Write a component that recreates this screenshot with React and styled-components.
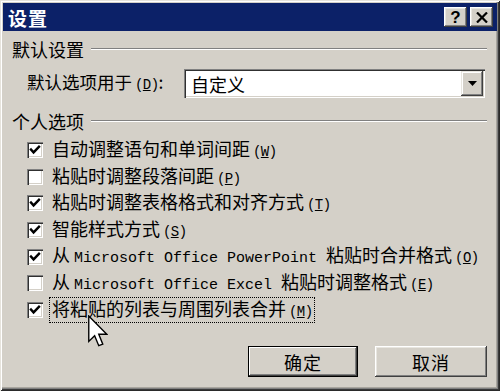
import React from "react";
import styled, { createGlobalStyle } from "styled-components";

const Global = createGlobalStyle`
  html, body { margin: 0; padding: 0; background: #d4d0c8; }
  body { font-family: "Noto Sans CJK SC", sans-serif; }
`;

const Frame = styled.div`
  position: relative;
  width: 500px;
  height: 391px;
  box-sizing: border-box;
  padding: 3px 3px 5px 3px;
  background: #d4d0c8;
  box-shadow: inset 1px 1px 0 #e6e3dc, inset -1px -1px 0 #2a2a2a,
    inset 2px 2px 0 #ffffff, inset -2px -2px 0 #3a3a3a,
    inset -3px -3px 0 #808080, inset -4px -4px 0 #a8a59e;
  display: flex;
  flex-direction: column;
  color: #000;
  font-family: "Noto Sans CJK SC", sans-serif;
  overflow: hidden;
`;

const TitleBar = styled.div`
  height: 28px;
  flex: none;
  background: #0c2168;
  display: flex;
  align-items: center;
  padding: 0 4px 0 5px;
`;

const Title = styled.div`
  flex: 1;
  color: #fff;
  font-weight: 700;
  font-size: 19px;
  letter-spacing: 1px;
  line-height: 1;
`;

const CapButton = styled.div`
  width: 23px;
  height: 20px;
  box-sizing: border-box;
  margin-left: ${(p) => p.$gap || 0}px;
  background: #d4d0c8;
  box-shadow: inset -1px -1px 0 #404040, inset 1px 1px 0 #ffffff,
    inset -2px -2px 0 #808080, inset 2px 2px 0 #e8e6e0;
  display: flex;
  align-items: center;
  justify-content: center;
  font-family: "Liberation Sans", sans-serif;
  font-weight: 700;
  font-size: 17px;
  line-height: 1;
  color: #000;
`;

const Body = styled.div`
  flex: 1;
  display: flex;
  flex-direction: column;
  padding: 0 10px 0 9px;
`;

const GroupHeader = styled.div`
  display: flex;
  align-items: center;
  height: 20px;
  margin-top: ${(p) => p.$top}px;
  font-size: 18px;
  line-height: 20px;
`;

const Rule = styled.div`
  flex: 1;
  margin-left: 7px;
  height: 0;
  border-top: 1px solid #808080;
  border-bottom: 1px solid #ffffff;
`;

const ComboRow = styled.div`
  display: flex;
  align-items: center;
  height: 29px;
  margin: 10px 2px 0 15px;
`;

const ComboLabel = styled.div`
  width: 157px;
  font-size: 17.5px;
  line-height: 20px;
  white-space: nowrap;
`;

const Combo = styled.div`
  flex: 1;
  height: 29px;
  box-sizing: border-box;
  padding: 2px;
  background: #fff;
  box-shadow: inset 1px 1px 0 #808080, inset 2px 2px 0 #303030,
    inset -1px -1px 0 #ffffff, inset -2px -2px 0 #d4d0c8;
  display: flex;
  align-items: center;
`;

const ComboValue = styled.div`
  flex: 1;
  padding-left: 5px;
  font-size: 18px;
  line-height: 20px;
`;

const DropButton = styled.div`
  width: 22px;
  height: 25px;
  box-sizing: border-box;
  background: #d4d0c8;
  box-shadow: inset -1px -1px 0 #404040, inset 1px 1px 0 #e8e6e0,
    inset -2px -2px 0 #808080, inset 2px 2px 0 #ffffff;
  display: flex;
  align-items: center;
  justify-content: center;
`;

const List = styled.div`
  display: flex;
  flex-direction: column;
  margin: 6px 0 0 15px;
`;

const Row = styled.div`
  height: 26.6px;
  display: flex;
  align-items: center;
`;

const Box = styled.div`
  width: 16px;
  height: 16px;
  flex: none;
  box-sizing: border-box;
  background: #fff;
  box-shadow: inset 1px 1px 0 #808080, inset 2px 2px 0 #303030,
    inset -1px -1px 0 #ffffff, inset -2px -2px 0 #d4d0c8;
  display: flex;
  align-items: center;
  justify-content: center;
`;

const Label = styled.div`
  margin-left: 6px;
  padding: 0 2px;
  border: 1px dotted ${(p) => (p.$focus ? "#000" : "transparent")};
  font-size: 18px;
  line-height: 20px;
  white-space: nowrap;
`;

const Mono = styled.span`
  font-family: "Liberation Mono", monospace;
  font-size: 15px;
`;

const Accel = styled.span`
  font-family: "Liberation Mono", monospace;
  font-size: 14px;
  letter-spacing: -0.6px;
  margin-left: 3px;
`;

const U = styled.span`
  text-decoration: underline;
`;

const ButtonRow = styled.div`
  display: flex;
  justify-content: flex-end;
  gap: 17px;
  margin-top: 23px;
`;

const PushButton = styled.div`
  width: ${(p) => p.$w}px;
  height: 31px;
  box-sizing: border-box;
  background: #d4d0c8;
  display: flex;
  align-items: center;
  justify-content: center;
  font-size: 18px;
  letter-spacing: 1px;
  box-shadow: ${(p) =>
    p.$default
      ? "inset 0 0 0 1px #000, inset -2px -2px 0 #404040, inset 2px 2px 0 #ffffff, inset -3px -3px 0 #808080"
      : "inset -1px -1px 0 #404040, inset 1px 1px 0 #ffffff, inset -2px -2px 0 #808080, inset 2px 2px 0 #e8e6e0"};
`;

const Cursor = styled.svg`
  position: absolute;
  left: 88px;
  top: 315px;
`;

const Check = () => (
  <svg width="12" height="12" viewBox="0 0 12 12">
    <path d="M2 5.5 L4.6 8.4 L10 2.8" fill="none" stroke="#000" strokeWidth="2.4" strokeLinecap="square" />
  </svg>
);

const items = [
  { checked: true, text: "自动调整语句和单词间距", key: "W" },
  { checked: false, text: "粘贴时调整段落间距", key: "P" },
  { checked: true, text: "粘贴时调整表格格式和对齐方式", key: "T" },
  { checked: true, text: "智能样式方式", key: "S" },
  { checked: true, pre: "从 ", mono: "Microsoft Office PowerPoint ", text: "粘贴时合并格式", key: "O" },
  { checked: false, pre: "从 ", mono: "Microsoft Office Excel ", text: "粘贴时调整格式", key: "E" },
  { checked: true, text: "将粘贴的列表与周围列表合并", key: "M", focus: true },
];

export default function App() {
  return (
    <>
      <Global />
      <Frame>
        <TitleBar>
          <Title>设置</Title>
          <CapButton>?</CapButton>
          <CapButton $gap={3}>
            <svg width="12" height="11" viewBox="0 0 12 11">
              <path d="M1 0.5 L11 10.5 M11 0.5 L1 10.5" stroke="#000" strokeWidth="2.2" />
            </svg>
          </CapButton>
        </TitleBar>
        <Body>
          <GroupHeader $top={8}>
            默认设置
            <Rule />
          </GroupHeader>
          <ComboRow>
            <ComboLabel>
              默认选项用于<Accel>(<U>D</U>)</Accel>:
            </ComboLabel>
            <Combo>
              <ComboValue>自定义</ComboValue>
              <DropButton>
                <svg width="9" height="5" viewBox="0 0 9 5">
                  <path d="M0 0 H9 L4.5 5 Z" fill="#000" />
                </svg>
              </DropButton>
            </Combo>
          </ComboRow>
          <GroupHeader $top={13}>
            个人选项
            <Rule />
          </GroupHeader>
          <List>
            {items.map((it, i) => (
              <Row key={i}>
                <Box>{it.checked && <Check />}</Box>
                <Label $focus={it.focus}>
                  {it.pre}
                  {it.mono && <Mono>{it.mono}</Mono>}
                  {it.text}
                  <Accel>
                    (<U>{it.key}</U>)
                  </Accel>
                </Label>
              </Row>
            ))}
          </List>
          <ButtonRow>
            <PushButton $w={110} $default>确定</PushButton>
            <PushButton $w={112}>取消</PushButton>
          </ButtonRow>
        </Body>
        <Cursor width="20" height="32" viewBox="0 0 13 20.5">
          <path
            d="M0.5 0.5 L0.5 17 L4.3 13.3 L7 19.8 L9.6 18.8 L7 12.4 L12.2 12.4 Z"
            fill="#fff"
            stroke="#000"
            strokeWidth="0.9"
            strokeLinejoin="miter"
          />
        </Cursor>
      </Frame>
    </>
  );
}
